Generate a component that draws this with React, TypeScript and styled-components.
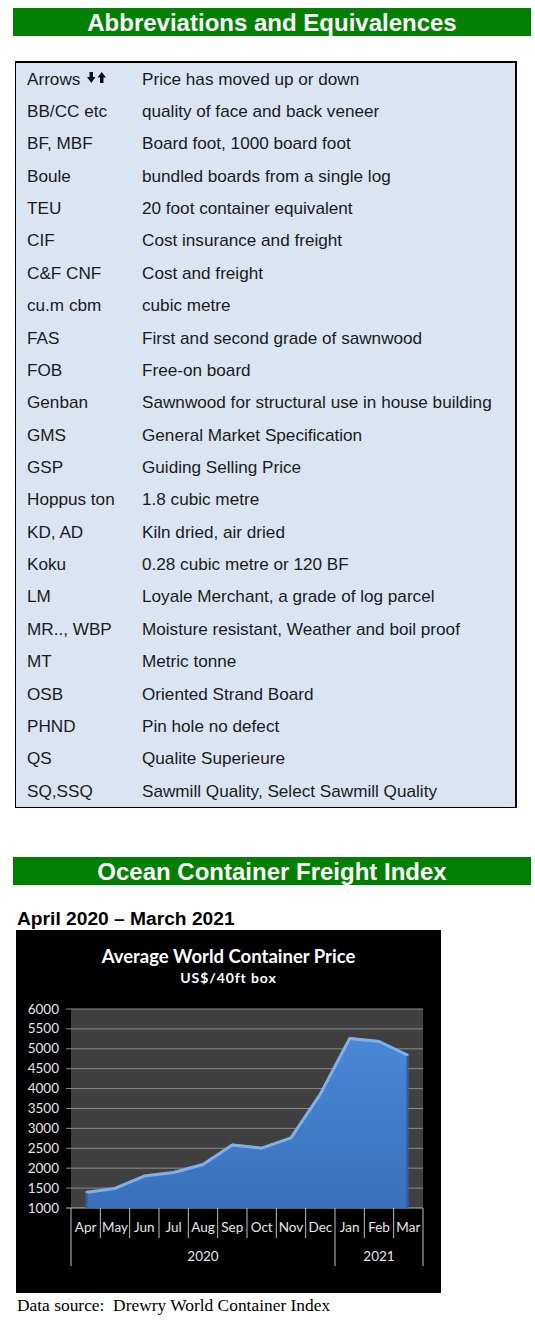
import React from "react";
import styled, { createGlobalStyle } from "styled-components";

const Global = createGlobalStyle`
  html, body { margin: 0; padding: 0; background: #fff; }
  body { font-family: "Liberation Sans", Arial, sans-serif; color: #111; }
`;

const Page = styled.div`
  width: 518px;
  padding: 8px 0 20px 13px;
  display: flex;
  flex-direction: column;
`;

const GreenBar = styled.div<{ $top?: number }>`
  height: 28px;
  margin-top: ${(p) => p.$top ?? 0}px;
  background: #008000;
  color: #fff;
  font-weight: bold;
  font-size: 24px;
  line-height: 29px;
  text-align: center;
`;

const Table = styled.div`
  margin: 25px 0 0 2px;
  width: 502px;
  box-sizing: border-box;
  background: #dbe5f1;
  border: 1px solid #000;
  border-top-width: 2px;
  border-right-width: 2px;
  display: flex;
  flex-direction: column;
`;

const Row = styled.div`
  height: 32.36px;
  display: grid;
  grid-template-columns: 115px 1fr;
  align-items: center;
  padding-left: 11px;
  font-size: 17.15px;
  color: #1a1a1a;
`;

const Term = styled.span`
  display: flex;
  align-items: center;
  gap: 7px;
`;

const Arrows = styled.svg`
  width: 19px;
  height: 11px;
  margin-top: -3px;
`;

const Period = styled.div`
  margin: 23px 0 0 4px;
  font-weight: bold;
  font-size: 19.2px;
  line-height: 22px;
  color: #000;
`;

const ChartBox = styled.div`
  margin-left: 3px;
  width: 425px;
  height: 363px;
  background: #000;
  display: flex;
  flex-direction: column;
  align-items: center;
  font-family: Lato, "Open Sans", sans-serif;
  color: #fff;
`;

const ChartTitle = styled.div`
  margin-top: 15px;
  font-weight: bold;
  font-size: 18.5px;
  line-height: 23px;
`;

const ChartSub = styled.div`
  margin-top: 1px;
  font-weight: bold;
  font-size: 14px;
  letter-spacing: 0.9px;
  line-height: 17px;
`;

const Plot = styled.svg`
  display: block;
  width: 425px;
  height: 307px;
  font-family: Lato, "Open Sans", sans-serif;
`;

const Source = styled.div`
  margin: 2px 0 0 4px;
  font-family: "Liberation Serif", "Times New Roman", serif;
  font-size: 17.4px;
  line-height: 20px;
  color: #000;
`;

const rows: [string, string][] = [
  ["Arrows", "Price has moved up or down"],
  ["BB/CC etc", "quality of face and back veneer"],
  ["BF, MBF", "Board foot, 1000 board foot"],
  ["Boule", "bundled boards from a single log"],
  ["TEU", "20 foot container equivalent"],
  ["CIF", "Cost insurance and freight"],
  ["C&F CNF", "Cost and freight"],
  ["cu.m cbm", "cubic metre"],
  ["FAS", "First and second grade of sawnwood"],
  ["FOB", "Free-on board"],
  ["Genban", "Sawnwood for structural use in house building"],
  ["GMS", "General Market Specification"],
  ["GSP", "Guiding Selling Price"],
  ["Hoppus ton", "1.8 cubic metre"],
  ["KD, AD", "Kiln dried, air dried"],
  ["Koku", "0.28 cubic metre or 120 BF"],
  ["LM", "Loyale Merchant, a grade of log parcel"],
  ["MR.., WBP", "Moisture resistant, Weather and boil proof"],
  ["MT", "Metric tonne"],
  ["OSB", "Oriented Strand Board"],
  ["PHND", "Pin hole no defect"],
  ["QS", "Qualite Superieure"],
  ["SQ,SSQ", "Sawmill Quality, Select Sawmill Quality"],
];

const months = ["Apr", "May", "Jun", "Jul", "Aug", "Sep", "Oct", "Nov", "Dec", "Jan", "Feb", "Mar"];
const values = [1430, 1530, 1840, 1930, 2130, 2620, 2540, 2800, 3900, 5300, 5220, 4870];

const X0 = 55;
const X1 = 407;
const Y0 = 278; // 1000
const YTOP = 79; // 6000
const step = (X1 - X0) / 12;
const yOf = (v: number) => Y0 - ((v - 1000) * (Y0 - YTOP)) / 5000;
const xOf = (i: number) => X0 + step * (i + 0.5);

function Chart() {
  const pts = values.map((v, i) => [xOf(i), yOf(v)] as const);
  const top = pts.map(([x, y]) => `${x.toFixed(1)},${y.toFixed(1)}`).join(" L");
  const area = `M${pts[0][0].toFixed(1)},${Y0} L${top} L${pts[11][0].toFixed(1)},${Y0} Z`;
  const ticks = [1000, 1500, 2000, 2500, 3000, 3500, 4000, 4500, 5000, 5500, 6000];
  return (
    <Plot viewBox="0 56 425 307">
      <defs>
        <linearGradient id="fillG" x1="0" y1="0" x2="0" y2="1">
          <stop offset="0" stopColor="#4a88d6" />
          <stop offset="1" stopColor="#3a70bb" />
        </linearGradient>
      </defs>
      <rect x={X0} y={YTOP} width={X1 - X0} height={Y0 - YTOP} fill="#404040" />
      {ticks.map((t) => (
        <g key={t}>
          <line x1={X0 - 5} x2={X1} y1={yOf(t)} y2={yOf(t)} stroke={t === 1000 ? "#bfbfbf" : "#8a8a8a"} strokeWidth={1} />
          <text x={43} y={yOf(t) + 4.5} textAnchor="end" fill="#e6e6e6" fontSize={13.5}>
            {t}
          </text>
        </g>
      ))}
      <path d={area} fill="url(#fillG)" />
      <path d={`M${top}`} fill="none" stroke="#7fb0ee" strokeWidth={3} strokeLinejoin="round" transform="translate(0,1.5)" />
      <line x1={pts[0][0] + 1} x2={pts[0][0] + 1} y1={pts[0][1] + 2} y2={Y0} stroke="#2f5f9f" strokeWidth={2} />
      <line x1={pts[11][0] - 1} x2={pts[11][0] - 1} y1={pts[11][1] + 2} y2={Y0} stroke="#2f5f9f" strokeWidth={2} />
      {Array.from({ length: 13 }, (_, k) => {
        const long = k === 0 || k === 9 || k === 12;
        const x = X0 + step * k;
        return <line key={k} x1={x} x2={x} y1={Y0} y2={long ? 336 : 308} stroke="#bfbfbf" strokeWidth={1} />;
      })}
      {months.map((m, i) => (
        <text key={m} x={xOf(i)} y={301.5} textAnchor="middle" fill="#e6e6e6" fontSize={13.5}>
          {m}
        </text>
      ))}
      <text x={(X0 + X0 + step * 9) / 2} y={330.5} textAnchor="middle" fill="#e6e6e6" fontSize={13.5}>
        2020
      </text>
      <text x={(X0 + step * 9 + X1) / 2} y={330.5} textAnchor="middle" fill="#e6e6e6" fontSize={13.5}>
        2021
      </text>
    </Plot>
  );
}

export default function App() {
  return (
    <>
      <Global />
      <Page>
        <GreenBar>Abbreviations and Equivalences</GreenBar>
        <Table>
          {rows.map(([a, b]) => (
            <Row key={a}>
              <Term>
                {a}
                {a === "Arrows" && (
                  <Arrows viewBox="0 0 19 11">
                    <path d="M2.5 0 H6 V5 H8.5 L4.25 11 L0 5 H2.5 Z" fill="#111" />
                    <path d="M13 11 H16.5 V5.5 H19 L14.75 0 L10.5 5.5 H13 Z" fill="#111" />
                  </Arrows>
                )}
              </Term>
              <span>{b}</span>
            </Row>
          ))}
        </Table>
        <GreenBar $top={49}>Ocean Container Freight Index</GreenBar>
        <Period>April 2020 – March 2021</Period>
        <ChartBox>
          <ChartTitle>Average World Container Price</ChartTitle>
          <ChartSub>US$/40ft box</ChartSub>
          <Chart />
        </ChartBox>
        <Source>Data source:&nbsp; Drewry World Container Index</Source>
      </Page>
    </>
  );
}
